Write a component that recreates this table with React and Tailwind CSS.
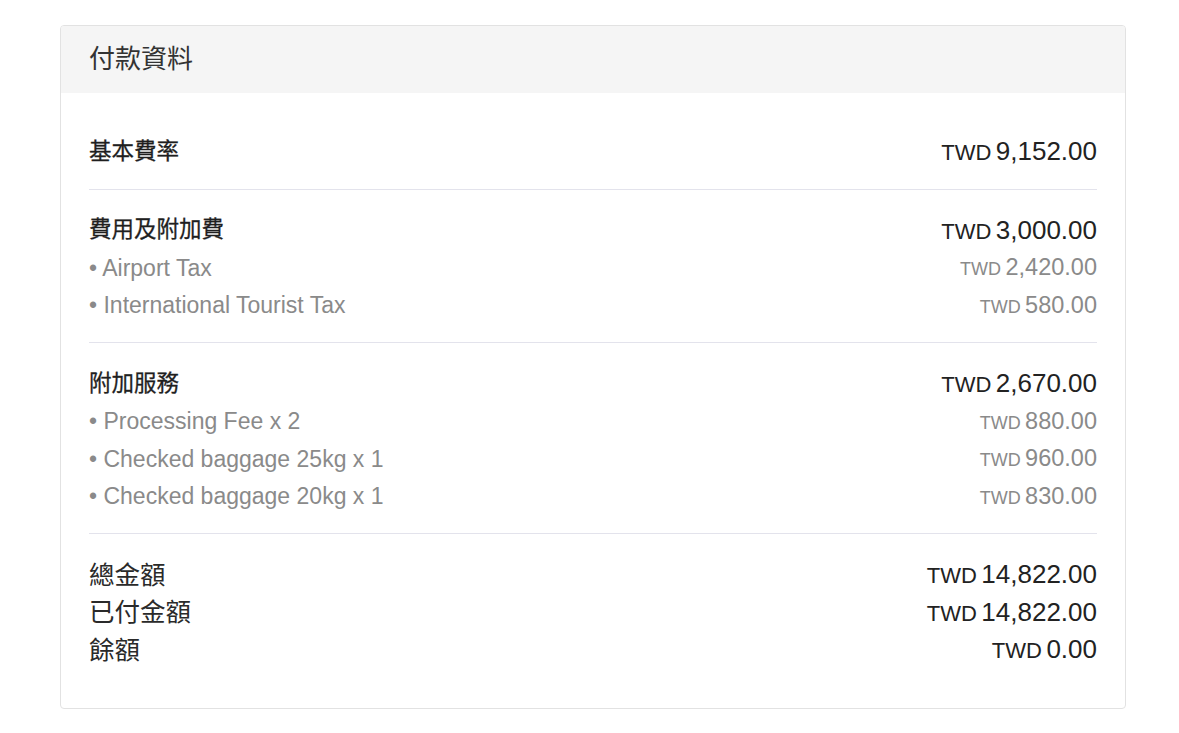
const font = { fontFamily: '"Liberation Sans", "Noto Sans CJK TC", sans-serif' };

function Amount({ value, sub }) {
  if (sub) {
    return (
      <span className="text-[#8a8a8a] whitespace-nowrap">
        <span className="text-[18px]">TWD</span> <span className="text-[23.5px]">{value}</span>
      </span>
    );
  }
  return (
    <span className="text-[#222] whitespace-nowrap">
      <span className="text-[22px]">TWD</span> <span className="text-[26px]">{value}</span>
    </span>
  );
}

function Row({ label, value, sub, big }) {
  return (
    <div className="flex items-center justify-between h-[37.5px]">
      {sub ? (
        <span className="text-[23px] text-[#8a8a8a]">• {label}</span>
      ) : (
        <span className={big ? "text-[25.5px] text-[#2a2a2a]" : "text-[22.5px] text-[#1f1f1f] [-webkit-text-stroke:0.3px_#1f1f1f]"}>{label}</span>
      )}
      <Amount value={value} sub={sub} />
    </div>
  );
}

function Section({ children, last }) {
  return (
    <div className={`pt-[22px] pb-[18px] ${last ? "" : "border-b border-[#e3e3ec]"}`}>
      {children}
    </div>
  );
}

export default function App() {
  return (
    <div className="min-h-screen bg-white pt-[25px] pl-[60px]" style={font}>
      <div className="w-[1066px] border border-[#e2e2e2] rounded-[4px] overflow-hidden">
        <div className="h-[67px] bg-[#f5f5f5] px-[28px] flex items-center">
          <span className="text-[26px] text-[#333]">付款資料</span>
        </div>
        <div className="px-[28px] pt-[18px] pb-[21px]">
          <Section>
            <Row label="基本費率" value="9,152.00" />
          </Section>
          <Section>
            <Row label="費用及附加費" value="3,000.00" />
            <Row label="Airport Tax" value="2,420.00" sub />
            <Row label="International Tourist Tax" value="580.00" sub />
          </Section>
          <Section>
            <Row label="附加服務" value="2,670.00" />
            <Row label="Processing Fee x 2" value="880.00" sub />
            <Row label="Checked baggage 25kg x 1" value="960.00" sub />
            <Row label="Checked baggage 20kg x 1" value="830.00" sub />
          </Section>
          <Section last>
            <Row label="總金額" value="14,822.00" big />
            <Row label="已付金額" value="14,822.00" big />
            <Row label="餘額" value="0.00" big />
          </Section>
        </div>
      </div>
    </div>
  );
}
